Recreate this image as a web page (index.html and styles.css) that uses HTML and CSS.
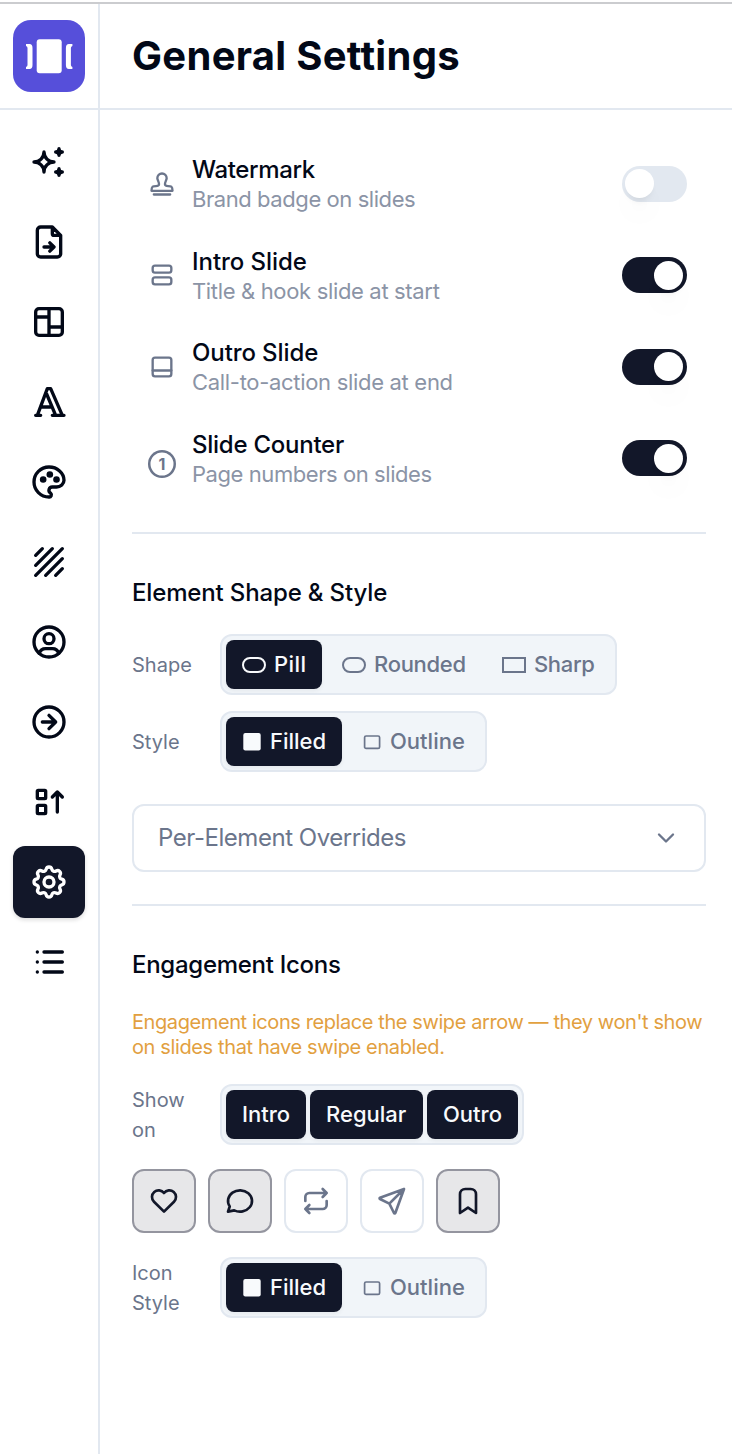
FILE: index.html
```html
<!DOCTYPE html>
<html lang="en">
<head>
<meta charset="utf-8">
<title>General Settings</title>
<link rel="stylesheet" href="styles.css">
</head>
<body>
<div class="app">
  <aside class="sidebar">
    <div class="brand">
      <div class="logo">
        <svg width="72" height="72" viewBox="0 0 72 72"><rect x="23.700" y="19.200" width="25" height="34" rx="3" fill="#fff"/><path d="M13 24h3.500q3 0 3 4v17q0 4-3 4H13v-2q1.500-.3 1.500-2V28q0-1.700-1.500-2zM59.400 24h-3.500q-3 0-3 4v17q0 4 3 4h3.500v-2q-1.500-.3-1.500-2V28q0-1.700 1.500-2z" fill="#fff"/></svg>
      </div>
    </div>
    <nav class="nav">
      <button class="nav-item"><svg class="icon" viewBox="0 0 24 24"><path d="M16 18a2 2 0 0 1 2 2a2 2 0 0 1 2 -2a2 2 0 0 1 -2 -2a2 2 0 0 1 -2 2m0 -12a2 2 0 0 1 2 2a2 2 0 0 1 2 -2a2 2 0 0 1 -2 -2a2 2 0 0 1 -2 2m-7 12a6 6 0 0 1 6 -6a6 6 0 0 1 -6 -6a6 6 0 0 1 -6 6a6 6 0 0 1 6 6"/></svg></button>
      <button class="nav-item"><svg class="icon" viewBox="0 0 24 24"><path d="M14 3v4a1 1 0 0 0 1 1h4M17 21h-10a2 2 0 0 1 -2 -2v-14a2 2 0 0 1 2 -2h7l5 5v11a2 2 0 0 1 -2 2M9 15h6M12.500 17.500l2.500 -2.500l-2.500 -2.500"/></svg></button>
      <button class="nav-item"><svg class="icon" viewBox="0 0 24 24"><rect x="4" y="4" width="16" height="16" rx="2"/><path d="M4 9h8M12 15h8M12 4v16"/></svg></button>
      <button class="nav-item"><svg class="icon" viewBox="0 0 24 24"><path d="M4 20h3M14 20h7M6.900 15h6.900M10.200 6.300l5.800 13.700M5 20l6 -16h2l7 16"/></svg></button>
      <button class="nav-item"><svg class="icon" viewBox="0 0 24 24"><path d="M12 21a9 9 0 0 1 0 -18c4.970 0 9 3.582 9 8c0 1.060 -.474 2.078 -1.318 2.828c-.844 .75 -1.989 1.172 -3.182 1.172h-2.500a2 2 0 0 0 -1 3.750a1.300 1.300 0 0 1 -1 2.250"/><circle cx="8.500" cy="10.500" r="1"/><circle cx="12.500" cy="7.500" r="1"/><circle cx="16.500" cy="10.500" r="1"/></svg></button>
      <button class="nav-item"><svg class="icon" viewBox="0 0 24 24"><path d="M4 8l4 -4M14 4l-10 10M4 20l16 -16M20 10l-10 10M20 16l-4 4"/></svg></button>
      <button class="nav-item"><svg class="icon" viewBox="0 0 24 24"><circle cx="12" cy="12" r="9"/><circle cx="12" cy="10" r="3"/><path d="M6.168 18.849a4 4 0 0 1 3.832 -2.849h4a4 4 0 0 1 3.834 2.855"/></svg></button>
      <button class="nav-item"><svg class="icon" viewBox="0 0 24 24"><circle cx="12" cy="12" r="9"/><path d="M16 12l-4 -4M16 12h-8M12 16l4 -4"/></svg></button>
      <button class="nav-item"><svg class="icon" viewBox="0 0 24 24"><path d="M14 9l3 -3l3 3M17 6v12"/><rect x="5" y="5" width="5" height="5" rx=".5"/><rect x="5" y="14" width="5" height="5" rx=".5"/></svg></button>
      <button class="nav-item nav-item-active"><svg class="icon" viewBox="0 0 24 24"><path d="M10.325 4.317c.426 -1.756 2.924 -1.756 3.350 0a1.724 1.724 0 0 0 2.573 1.066c1.543 -.94 3.310 .826 2.370 2.370a1.724 1.724 0 0 0 1.065 2.572c1.756 .426 1.756 2.924 0 3.350a1.724 1.724 0 0 0 -1.066 2.573c.94 1.543 -.826 3.310 -2.370 2.370a1.724 1.724 0 0 0 -2.572 1.065c-.426 1.756 -2.924 1.756 -3.350 0a1.724 1.724 0 0 0 -2.573 -1.066c-1.543 .94 -3.310 -.826 -2.370 -2.370a1.724 1.724 0 0 0 -1.065 -2.572c-1.756 -.426 -1.756 -2.924 0 -3.350a1.724 1.724 0 0 0 1.066 -2.573c-.94 -1.543 .826 -3.310 2.370 -2.370c1 .608 2.296 .07 2.572 -1.065z"/><circle cx="12" cy="12" r="3"/></svg></button>
      <button class="nav-item"><svg class="icon" viewBox="0 0 24 24"><path d="M9 6h11M9 12h11M9 18h11M5 6v.01M5 12v.01M5 18v.01"/></svg></button>
    </nav>
  </aside>
  <div class="panel">
    <header class="header"><h1 class="title">General Settings</h1></header>
    <main class="content">
      <section class="options">
        <div class="option">
          <svg class="icon icon-row" viewBox="0 0 24 24"><path d="M21 17.850h-18c0 -4.050 1.421 -4.050 3.790 -4.050c5.210 0 1.210 -4.590 1.210 -6.800a4 4 0 1 1 8 0c0 2.210 -4 6.800 1.210 6.800c2.369 0 3.790 0 3.790 4.050zM5 21h14"/></svg>
          <div class="option-text"><div class="option-name n-watermark">Watermark</div><div class="option-note s-watermark">Brand badge on slides</div></div>
          <span class="toggle"><span class="thumb"></span></span>
        </div>
        <div class="option">
          <svg class="icon icon-row" viewBox="0 0 24 24"><rect x="4" y="4" width="16" height="6" rx="2"/><rect x="4" y="14" width="16" height="6" rx="2"/></svg>
          <div class="option-text"><div class="option-name n-intro">Intro Slide</div><div class="option-note s-intro">Title &amp; hook slide at start</div></div>
          <span class="toggle toggle-on"><span class="thumb"></span></span>
        </div>
        <div class="option">
          <svg class="icon icon-row" viewBox="0 0 24 24"><rect x="4" y="4" width="16" height="16" rx="2"/><path d="M4 15h16"/></svg>
          <div class="option-text"><div class="option-name n-outro">Outro Slide</div><div class="option-note s-outro">Call-to-action slide at end</div></div>
          <span class="toggle toggle-on"><span class="thumb"></span></span>
        </div>
        <div class="option">
          <span class="counter">1</span>
          <div class="option-text"><div class="option-name n-counter">Slide Counter</div><div class="option-note s-counter">Page numbers on slides</div></div>
          <span class="toggle toggle-on"><span class="thumb"></span></span>
        </div>
      </section>

      <section class="section">
        <h2 class="heading h-shape">Element Shape &amp; Style</h2>
        <div class="field">
          <span class="label">Shape</span>
          <div class="segments">
            <button class="segment segment-on w-pill"><span class="shape shape-pill"></span><span>Pill</span></button>
            <button class="segment w-rounded"><span class="shape shape-rounded"></span><span>Rounded</span></button>
            <button class="segment w-sharp"><span class="shape"></span><span>Sharp</span></button>
          </div>
        </div>
        <div class="field">
          <span class="label">Style</span>
          <div class="segments">
            <button class="segment segment-on w-filled"><svg class="swatch" viewBox="0 0 20 20"><rect x="1.300" y="1" width="17.400" height="17.500" rx="2" fill="currentColor"/></svg><span>Filled</span></button>
            <button class="segment w-outline"><svg class="swatch" viewBox="0 0 20 20"><rect x="2.600" y="4" width="15" height="12.400" rx="1.500" fill="none" stroke="currentColor" stroke-width="1.700"/></svg><span>Outline</span></button>
          </div>
        </div>
        <button class="disclosure"><span>Per-Element Overrides</span><svg class="icon icon-chevron" viewBox="0 0 24 24"><path d="M6 9l6 6l6 -6"/></svg></button>
      </section>

      <section class="section">
        <h2 class="heading h-engage">Engagement Icons</h2>
        <p class="notice"><span class="line-a">Engagement icons replace the swipe arrow — they won't show</span><br><span class="line-b">on slides that have swipe enabled.</span></p>
        <div class="field field-show">
          <span class="label">Show on</span>
          <div class="segments">
            <button class="segment segment-on w-intro"><span>Intro</span></button>
            <button class="segment segment-on w-regular"><span>Regular</span></button>
            <button class="segment segment-on w-outro"><span>Outro</span></button>
          </div>
        </div>
        <div class="tiles">
          <button class="tile tile-on"><svg class="icon" viewBox="0 0 24 24"><path d="M19.500 12.572l-7.500 7.428l-7.500 -7.428a5 5 0 1 1 7.500 -6.566a5 5 0 1 1 7.500 6.572"/></svg></button>
          <button class="tile tile-on"><svg class="icon" viewBox="0 0 24 24"><path d="M3 20l1.300 -3.900c-2.324 -3.437 -1.426 -7.872 2.100 -10.374c3.526 -2.501 8.590 -2.296 11.845 .48c3.255 2.777 3.695 7.266 1.029 10.501c-2.666 3.235 -7.615 4.215 -11.574 2.293l-4.700 1"/></svg></button>
          <button class="tile"><svg class="icon" viewBox="0 0 24 24"><path d="M4 12v-3a3 3 0 0 1 3 -3h13m-3 -3l3 3l-3 3M20 12v3a3 3 0 0 1 -3 3h-13m3 3l-3 -3l3 -3"/></svg></button>
          <button class="tile"><svg class="icon" viewBox="0 0 24 24"><path d="M10 14l11 -11M21 3l-6.500 18a.55 .55 0 0 1 -1 0l-3.500 -7l-7 -3.500a.55 .55 0 0 1 0 -1l18 -6.500"/></svg></button>
          <button class="tile tile-on"><svg class="icon" viewBox="0 0 24 24"><path d="M18 7v14l-6 -4l-6 4v-14a4 4 0 0 1 4 -4h4a4 4 0 0 1 4 4z"/></svg></button>
        </div>
        <div class="field">
          <span class="label">Icon Style</span>
          <div class="segments">
            <button class="segment segment-on w-filled"><svg class="swatch" viewBox="0 0 20 20"><rect x="1.300" y="1" width="17.400" height="17.500" rx="2" fill="currentColor"/></svg><span>Filled</span></button>
            <button class="segment w-outline"><svg class="swatch" viewBox="0 0 20 20"><rect x="2.600" y="4" width="15" height="12.400" rx="1.500" fill="none" stroke="currentColor" stroke-width="1.700"/></svg><span>Outline</span></button>
          </div>
        </div>
      </section>
    </main>
  </div>
</div>
</body>
</html>
```
FILE: styles.css
```css
* { box-sizing: border-box; }
body { margin: 0; background: #fff; color: #020817; font-family: Inter, "Liberation Sans", sans-serif; }
h1, h2, p { margin: 0; }
button { font: inherit; color: inherit; background: none; border: 0; padding: 0; margin: 0; }
.app { display: flex; height: 1454px; padding-top: 4px; overflow: hidden; background: linear-gradient(#fff 0 2px, #cbcccf 2px 4px, #fff 4px); }
.sidebar { width: 100px; flex: none; border-right: 2px solid #e2e8f0; }
.brand { height: 106px; padding: 16px 13px; border-bottom: 2px solid #e2e8f0; }
.logo { width: 72px; height: 72px; border-radius: 18px; background: #564fda; }
.logo svg { display: block; }
.nav { display: flex; flex-direction: column; align-items: center; gap: 8px; padding-top: 16px; }
.nav-item { width: 72px; height: 72px; display: grid; place-items: center; border-radius: 12px; }
.nav-item-active { background: #121729; color: #fff; box-shadow: 0 2px 4px rgba(0,0,0,.14); }
.icon { display: block; width: 40px; height: 40px; fill: none; stroke: currentColor; stroke-width: 2; stroke-linecap: round; stroke-linejoin: round; }
.panel { flex: 1; min-width: 0; }
.header { height: 106px; border-bottom: 2px solid #e2e8f0; padding: 0 32px; display: flex; align-items: center; }
.title { font-size: 40px; font-weight: 700; line-height: 56px; letter-spacing: .3px; white-space: nowrap; }
.content { padding: 28px 26px 0 32px; }
.options { height: 396px; border-bottom: 2px solid #e2e8f0; }
.option { height: 91.500px; padding: 0 19.500px 0 16px; display: flex; align-items: center; }
.icon-row { width: 28px; height: 28px; flex: none; color: #6b758b; }
.counter { width: 28px; height: 28px; margin-top: 11px; flex: none; box-shadow: inset 0 0 0 2.500px #6b758b; border-radius: 50%; color: #6b758b; font-size: 16px; font-weight: 700; line-height: 28px; text-align: center; }
.option-text { flex: 1; padding-left: 16px; white-space: nowrap; }
.option-name { font-size: 24px; font-weight: 500; line-height: 32px; }
.option-note { font-size: 22px; line-height: 27.500px; color: #8b94a6; }
.n-watermark { letter-spacing: -.37px; }
.n-intro { letter-spacing: -.05px; }
.n-outro { letter-spacing: -.1px; }
.n-counter { letter-spacing: -.25px; }
.s-watermark { letter-spacing: -.43px; }
.s-intro { letter-spacing: -.34px; }
.s-outro { letter-spacing: -.31px; }
.s-counter { letter-spacing: -.43px; }
.toggle { display: flex; width: 65px; height: 36px; padding: 3.500px; border-radius: 18px; background: #e2e8f0; }
.toggle-on { justify-content: flex-end; background: #121729; }
.thumb { width: 29px; height: 29px; border-radius: 50%; background: #fff; box-shadow: 0 20px 30px -6px rgba(0,0,0,.06), 0 6px 10px -6px rgba(0,0,0,.16); }
.section { padding-top: 43px; }
.section + .section { margin-top: 32px; border-top: 2px solid #e2e8f0; }
.heading { font-size: 24px; font-weight: 500; line-height: 32px; white-space: nowrap; }
.h-shape { letter-spacing: -.15px; }
.h-engage { letter-spacing: -.28px; }
.field { display: flex; align-items: center; height: 61px; margin-top: 16px; }
.heading + .field { margin-top: 25px; }
.label { width: 88px; padding-right: 26px; flex: none; font-size: 20px; line-height: 30px; color: #6b758b; }
.segments { display: flex; gap: 4px; height: 61px; padding: 4px; border: 2px solid #e2e8f0; border-radius: 12px; background: #f1f5f9; }
.segment { height: 49px; display: flex; align-items: center; gap: 8px; padding: 0 16px; border-radius: 8px; font-size: 22px; font-weight: 500; line-height: 28px; color: #6b758b; white-space: nowrap; }
.segment > span:last-child { padding-bottom: 2px; }
.segment-on { background: #121729; color: #f8fafc; box-shadow: 0 2px 4px rgba(0,0,0,.05); }
.w-pill { width: 96px; letter-spacing: .4px; }
.w-rounded { width: 156px; letter-spacing: -.3px; }
.w-sharp { width: 125px; letter-spacing: -.35px; }
.w-filled { width: 116px; }
.w-outline { width: 135px; }
.w-intro { width: 80px; }
.w-regular { width: 113px; }
.w-outro { width: 91px; }
.shape { width: 24px; height: 16px; flex: none; border: 2px solid currentColor; }
.shape-pill, .shape-rounded { border-radius: 8px; }
.swatch { width: 20px; height: 20px; flex: none; }
.disclosure { display: flex; justify-content: space-between; align-items: center; width: 100%; height: 68px; margin-top: 32px; padding: 0 24px 1px; border: 2px solid #e2e8f0; border-radius: 12px; font-size: 24px; letter-spacing: -.46px; color: #6b758b; }
.icon-chevron { width: 28px; height: 28px; }
.notice { margin-top: 29px; font-size: 20px; line-height: 25px; color: #e2a03f; white-space: nowrap; }
.line-a { letter-spacing: -.41px; }
.line-b { letter-spacing: -.37px; }
.field-show { margin-top: 24px; }
.tiles { display: flex; gap: 12px; margin: 24px 0; }
.tile { width: 64px; height: 64px; display: grid; place-items: center; border: 2px solid #e2e8f0; border-radius: 12px; color: #6b758b; }
.tile .icon { width: 32px; height: 32px; }
.tile-on { background: #e7e7e9; border-color: #94959f; color: #121729; }
```
